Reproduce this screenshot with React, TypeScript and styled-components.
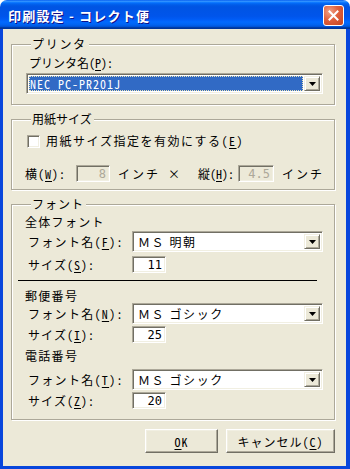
import React from "react";
import styled, { createGlobalStyle } from "styled-components";

const Global = createGlobalStyle`
  html, body { margin: 0; padding: 0; background: #ffffff; }
  body { font-family: "Noto Sans CJK JP", sans-serif; font-size: 12px; }
  * { box-sizing: border-box; }
`;

const UI_FONT = `"Noto Sans Mono CJK JP", "Noto Sans CJK JP", monospace`;

const Window = styled.div`
  width: 350px;
  height: 469px;
  display: flex;
  flex-direction: column;
  border-radius: 7px 7px 0 0;
  overflow: hidden;
`;

const TitleBar = styled.div`
  height: 29px;
  flex: none;
  display: flex;
  align-items: center;
  padding: 2px 6px 0 8px;
  background: linear-gradient(
    to bottom,
    #0058ee 0%,
    #3593ff 4%,
    #288eff 6%,
    #127dff 8%,
    #036ffc 10%,
    #0262ee 14%,
    #0057e5 20%,
    #0054e3 24%,
    #0055eb 56%,
    #005bf5 66%,
    #026afe 76%,
    #0062ef 86%,
    #0052d6 92%,
    #0040ab 94%,
    #003092 100%
  );
`;

const Title = styled.span`
  color: #ffffff;
  font-family: "Noto Sans CJK JP", sans-serif;
  font-weight: bold;
  font-size: 13px;
  letter-spacing: 1.2px;
  line-height: 16px;
  text-shadow: 1px 1px #0f1089;
  white-space: nowrap;
`;

const CloseButton = styled.div`
  margin-left: auto;
  width: 21px;
  height: 21px;
  border: 1px solid #ffffff;
  border-radius: 3px;
  background: radial-gradient(circle at 30% 30%, #f0a287 0%, #e0603d 45%, #c4441f 100%);
  display: flex;
  align-items: center;
  justify-content: center;
`;

const Body = styled.div`
  flex: 1;
  display: flex;
  flex-direction: column;
  background: #ece9d8;
  border-style: solid;
  border-color: #0846dc;
  border-width: 0 4px 3px 3px;
  padding: 8px 11px 0 8px;
`;

const Group = styled.fieldset<{ $mt?: number; $pb: number }>`
  margin: ${(p) => p.$mt ?? 0}px 0 0 0;
  padding: 0 10px ${(p) => p.$pb}px 13px;
  min-inline-size: 0;
  border: 1px solid #aca899;
  box-shadow: inset 1px 1px #ffffff, 1px 1px #ffffff;
  display: flex;
  flex-direction: column;
`;

const Legend = styled.legend<{ $ls?: number }>`
  margin-left: 6px;
  padding: 0 2px 0 1px;
  background: #ece9d8;
  font-family: "Noto Sans CJK JP", sans-serif;
  font-size: 12px;
  line-height: 14px;
  letter-spacing: ${(p) => p.$ls ?? 1}px;
  color: #000000;
`;

const Label = styled.span<{ $ls?: number; $w?: number; $pl?: number }>`
  display: inline-block;
  flex: none;
  font-family: ${UI_FONT};
  font-size: 12px;
  line-height: 14px;
  color: #000000;
  letter-spacing: ${(p) => p.$ls ?? 1}px;
  width: ${(p) => (p.$w ? `${p.$w}px` : "auto")};
  padding-left: ${(p) => p.$pl ?? 0}px;
  white-space: nowrap;
  u { text-decoration-thickness: 1px; text-underline-offset: 2px; }
`;

const Heading = styled.div<{ $mt: number }>`
  margin-top: ${(p) => p.$mt}px;
  font-family: "Noto Sans CJK JP", sans-serif;
  font-size: 12px;
  line-height: 14px;
  letter-spacing: 1.3px;
  color: #000000;
`;

const Row = styled.div<{ $mt: number; $pl?: number }>`
  display: flex;
  align-items: center;
  margin-top: ${(p) => p.$mt}px;
  padding-left: ${(p) => p.$pl ?? 0}px;
`;

const Combo = styled.div<{ $w: number }>`
  width: ${(p) => p.$w}px;
  height: 21px;
  flex: none;
  display: flex;
  background: #ffffff;
  border: 1px solid;
  border-color: #aca899 #ffffff #ffffff #aca899;
  box-shadow: inset 1px 1px #716f64, inset -1px -1px #f1efe2;
  padding: 2px;
  gap: 1px;
`;

const ComboText = styled.div<{ $selected?: boolean; $mono?: boolean }>`
  flex: 1;
  display: flex;
  align-items: center;
  padding-left: ${(p) => (p.$selected ? 1 : 3)}px;
  font-family: ${(p) => (p.$mono ? UI_FONT : `"Noto Sans CJK JP", sans-serif`)};
  font-size: 12px;
  letter-spacing: ${(p) => (p.$mono ? 1 : 1.6)}px;
  white-space: pre;
  color: ${(p) => (p.$selected ? "#ffffff" : "#000000")};
  background: ${(p) => (p.$selected ? "#316ac5" : "transparent")};
  outline: ${(p) => (p.$selected ? "1px dotted #e8e2b8" : "none")};
  outline-offset: -1px;
`;

const DropButton = styled.div`
  width: 16px;
  flex: none;
  display: flex;
  align-items: center;
  justify-content: center;
  background: #ece9d8;
  border: 1px solid;
  border-color: #f1efe2 #716f64 #716f64 #f1efe2;
  box-shadow: inset 1px 1px #ffffff, inset -1px -1px #aca899;
`;

const Field = styled.div<{ $w: number; $disabled?: boolean }>`
  width: ${(p) => p.$w}px;
  height: 17px;
  flex: none;
  display: flex;
  align-items: center;
  justify-content: flex-end;
  padding-right: 3px;
  background: ${(p) => (p.$disabled ? "#ece9d8" : "#ffffff")};
  border: 1px solid;
  border-color: #aca899 #ffffff #ffffff #aca899;
  box-shadow: inset 1px 1px #716f64, inset -1px -1px #f1efe2;
  font-family: "DejaVu Sans Mono", monospace;
  font-size: 12px;
  color: ${(p) => (p.$disabled ? "#aca899" : "#000000")};
`;

const CheckBox = styled.div`
  width: 13px;
  height: 13px;
  flex: none;
  margin: 0 6px 0 2px;
  background: #ffffff;
  border: 1px solid;
  border-color: #aca899 #ffffff #ffffff #aca899;
  box-shadow: inset 1px 1px #716f64, inset -1px -1px #f1efe2;
`;

const Separator = styled.div`
  margin: 7px 7px 0 -7px;
  height: 1px;
  background: #000000;
`;

const ButtonRow = styled.div`
  display: flex;
  justify-content: flex-end;
  gap: 8px;
  margin-top: 9px;
`;

const Button = styled.div<{ $w: number }>`
  width: ${(p) => p.$w}px;
  height: 24px;
  display: flex;
  align-items: center;
  justify-content: center;
  background: #ece9d8;
  border: 1px solid;
  border-color: #ffffff #716f64 #716f64 #ffffff;
  box-shadow: inset -1px -1px #aca899, inset 1px 1px #f1efe2;
  font-family: ${UI_FONT};
  font-size: 12px;
  letter-spacing: 1px;
  color: #000000;
  u { text-underline-offset: 2px; }
`;

const Arrow = () => (
  <svg width="7" height="4" viewBox="0 0 7 4">
    <path d="M0 0h7L3.5 4z" fill="#000" />
  </svg>
);

const FontRow = ({ mt, label, value }: { mt: number; label: React.ReactNode; value: string }) => (
  <Row $mt={mt} $pl={3}>
    <Label $w={104} $ls={1.3}>
      {label}
    </Label>
    <Combo $w={191}>
      <ComboText>{value}</ComboText>
      <DropButton>
        <Arrow />
      </DropButton>
    </Combo>
  </Row>
);

const SizeRow = ({ mt, label, value }: { mt: number; label: React.ReactNode; value: string }) => (
  <Row $mt={mt} $pl={3}>
    <Label $w={104} $ls={1}>
      {label}
    </Label>
    <Field $w={34}>{value}</Field>
  </Row>
);

export default function App() {
  return (
    <>
      <Global />
      <Window>
        <TitleBar>
          <Title>印刷設定 - コレクト便</Title>
          <CloseButton>
            <svg width="11" height="11" viewBox="0 0 11 11">
              <path d="M1.5 1.5l8 8M9.5 1.5l-8 8" stroke="#fff" strokeWidth="2" strokeLinecap="square" />
            </svg>
          </CloseButton>
        </TitleBar>
        <Body>
          <Group $pb={10}>
            <Legend $ls={1.7}>プリンタ</Legend>
            <Row $mt={5} $pl={4}>
              <Label $ls={0}>
                プリンタ名(<u>P</u>):
              </Label>
            </Row>
            <Row $mt={3} $pl={1}>
              <Combo $w={297}>
                <ComboText $selected $mono>
                  NEC PC-PR201J
                </ComboText>
                <DropButton>
                  <Arrow />
                </DropButton>
              </Combo>
            </Row>
          </Group>

          <Group $mt={7} $pb={7}>
            <Legend $ls={0}>用紙サイズ</Legend>
            <Row $mt={8}>
              <CheckBox />
              <Label $ls={1.5}>
                用紙サイズ指定を有効にする(<u>E</u>)
              </Label>
            </Row>
            <Row $mt={17}>
              <Label $w={51} $ls={1}>
                横(<u>W</u>):
              </Label>
              <Field $w={34} $disabled>
                8
              </Field>
              <Label $w={52} $pl={8} $ls={2}>
                インチ
              </Label>
              <Label $w={36} $pl={6}>
                ×
              </Label>
              <Label $w={40} $ls={0}>
                縦(<u>H</u>):
              </Label>
              <Field $w={36} $disabled>
                4.5
              </Field>
              <Label $pl={8} $ls={2}>
                インチ
              </Label>
            </Row>
          </Group>

          <Group $mt={7} $pb={10}>
            <Legend $ls={1}>フォント</Legend>
            <Heading $mt={4}>全体フォント</Heading>
            <FontRow mt={2} label={<>フォント名(<u>F</u>):</>} value="ＭＳ 明朝" />
            <SizeRow mt={4} label={<>サイズ(<u>S</u>):</>} value="11" />
            <Separator />
            <Heading $mt={8}>郵便番号</Heading>
            <FontRow mt={0} label={<>フォント名(<u>N</u>):</>} value="ＭＳ ゴシック" />
            <SizeRow mt={2} label={<>サイズ(<u>I</u>):</>} value="25" />
            <Heading $mt={6}>電話番号</Heading>
            <FontRow mt={6} label={<>フォント名(<u>T</u>):</>} value="ＭＳ ゴシック" />
            <SizeRow mt={2} label={<>サイズ(<u>Z</u>):</>} value="20" />
          </Group>

          <ButtonRow>
            <Button $w={73}>
              <span>
                <u>O</u>K
              </span>
            </Button>
            <Button $w={109}>
              <span>
                キャンセル(<u>C</u>)
              </span>
            </Button>
          </ButtonRow>
        </Body>
      </Window>
    </>
  );
}
